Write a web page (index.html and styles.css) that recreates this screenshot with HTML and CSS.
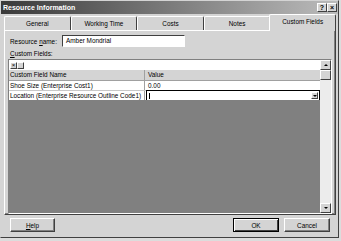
FILE: index.html
```html
<!DOCTYPE html>
<html lang="en">
<head>
  <meta charset="UTF-8">
  <title>Resource Information</title>
  <link rel="stylesheet" href="styles.css">
</head>
<body>

  <div class="window">
    <div class="titlebar">
      <span class="title">Resource Information</span>
      <span class="caption-btns">
        <span class="cbtn">?</span><span class="cbtn">×</span>
      </span>
    </div>

    <div class="page">
      <div class="tabs">
        <div class="tab">General</div>
        <div class="tab">Working Time</div>
        <div class="tab">Costs</div>
        <div class="tab">Notes</div>
        <div class="tab active">Custom Fields</div>
      </div>

      <div class="panel">
        <div class="name-row">
          <label>Resource <u>n</u>ame:</label>
          <div class="input">Amber Mondrial</div>
        </div>
        <div class="cf-label"><u>C</u>ustom Fields:</div>

        <div class="grid">
          <div class="grid-main">
            <div class="toolbar">
              <span class="tbtn">×</span><span class="tbtn"></span>
            </div>
            <div class="row head">
              <div class="c1">Custom Field Name</div>
              <div class="c2">Value</div>
            </div>
            <div class="row">
              <div class="c1">Shoe Size (Enterprise Cost1)</div>
              <div class="c2">0.00</div>
            </div>
            <div class="row last">
              <div class="c1">Location (Enterprise Resource Outline Code1)</div>
              <div class="c2 edit">
                <span class="caret"></span>
                <span class="dd"><i class="arrow down"></i></span>
              </div>
            </div>
            <div class="empty"></div>
          </div>
          <div class="vscroll">
            <div class="sbtn"><i class="arrow up"></i></div>
            <div class="thumb"></div>
            <div class="track"></div>
            <div class="sbtn"><i class="arrow down"></i></div>
          </div>
        </div>
      </div>

      <div class="buttons">
        <button class="btn help"><u>H</u>elp</button>
        <button class="btn default">OK</button>
        <button class="btn">Cancel</button>
      </div>
    </div>
  </div>

</body>
</html>
```

FILE: styles.css
```css
/* base */
body {
  margin: 0;
  background: #dcdcdc;
  font-family: "Liberation Sans", Arial, sans-serif;
  font-size: 6.4px;
  color: #000;
}
u { text-decoration: underline; }

/* dialog frame */
.window {
  width: 339px;
  height: 238px;
  box-sizing: border-box;
  background: #d4d4d4;
  border: 1px solid;
  border-color: #d4d4d4 #404040 #404040 #d4d4d4;
  display: flex;
  flex-direction: column;
}
.titlebar {
  height: 13px;
  background: linear-gradient(to right, #3a3a3a, #bcbcbc);
  display: flex;
  align-items: center;
  justify-content: space-between;
  padding: 0 1px 0 2px;
}
.title {
  color: #fff;
  font-weight: bold;
  font-size: 7px;
}
.caption-btns { display: flex; }
.cbtn {
  width: 10px;
  height: 9px;
  box-sizing: border-box;
  background: #d4d4d4;
  border: 1px solid;
  border-color: #fff #404040 #404040 #fff;
  font-size: 7px;
  font-weight: bold;
  line-height: 7px;
  text-align: center;
}

.page {
  flex: 1;
  padding: 0 2px 0 3px;
  display: flex;
  flex-direction: column;
}

/* tabs */
.tabs {
  display: flex;
  height: 16px;
  align-items: flex-end;
  position: relative;
  z-index: 1;
}
.tab {
  flex: 1;
  height: 14px;
  box-sizing: border-box;
  border: 1px solid;
  border-bottom: none;
  border-color: #fff #404040 transparent #fff;
  border-radius: 2px 2px 0 0;
  text-align: center;
  line-height: 13px;
}
.tab.active {
  height: 17px;
  margin: 0 0 -1px -1px;
  background: #d4d4d4;
  line-height: 13px;
}

/* tab page */
.panel {
  height: 185px;
  box-sizing: border-box;
  border: 1px solid;
  border-color: #fff #404040 #404040 #fff;
  box-shadow: inset -1px -1px #808080;
  padding: 4px 3px 0 3px;
}
.name-row {
  display: flex;
  align-items: center;
  height: 12px;
  padding-left: 2px;
}
.name-row label { width: 52px; }
.input {
  width: 123px;
  height: 12px;
  box-sizing: border-box;
  background: #fff;
  border: 1px solid;
  border-color: #404040 #fff #fff #404040;
  padding-left: 3px;
  line-height: 10px;
}
.cf-label {
  height: 12px;
  box-sizing: border-box;
  padding: 2px 0 0 2px;
  line-height: 10px;
}

/* custom field grid */
.grid {
  height: 155px;
  box-sizing: border-box;
  border: 1px solid;
  border-color: #808080 #fff #fff #808080;
  display: flex;
}
.grid-main {
  flex: 1;
  display: flex;
  flex-direction: column;
}
.toolbar {
  height: 10px;
  background: #fff;
  display: flex;
  align-items: center;
  padding-left: 1px;
}
.tbtn {
  width: 7px;
  height: 7px;
  box-sizing: border-box;
  background: #d4d4d4;
  border: 1px solid;
  border-color: #fff #404040 #404040 #fff;
  font-size: 6px;
  line-height: 5px;
  text-align: center;
}
.row {
  display: flex;
  height: 10px;
  box-sizing: border-box;
  line-height: 9px;
  background: #fff;
  border-bottom: 1px solid #c8c8c8;
}
.row.head {
  height: 11px;
  line-height: 10px;
  background: #d4d4d4;
  border-bottom-color: #a0a0a0;
}
.row.last {
  height: 9px;
  border-bottom: none;
}
.c1 {
  width: 136px;
  box-sizing: border-box;
  padding-left: 1px;
  border-right: 1px solid #a0a0a0;
  white-space: nowrap;
  overflow: hidden;
}
.c2 {
  flex: 1;
  padding-left: 3px;
}
.c2.edit {
  display: flex;
  align-items: center;
  justify-content: space-between;
  padding: 0 1px 0 2px;
  border: 1px solid #000;
  margin: -1px 0 -1px 1px;
}
.caret {
  width: 1px;
  height: 6px;
  background: #000;
}
.dd {
  width: 7px;
  height: 7px;
  box-sizing: border-box;
  background: #d4d4d4;
  border: 1px solid;
  border-color: #fff #404040 #404040 #fff;
  display: flex;
  align-items: center;
  justify-content: center;
}
.empty {
  flex: 1;
  background: #808080;
}

/* scrollbar */
.vscroll {
  width: 11px;
  display: flex;
  flex-direction: column;
  background: #ececec;
}
.sbtn, .thumb {
  height: 10px;
  box-sizing: border-box;
  background: #d4d4d4;
  border: 1px solid;
  border-color: #fff #404040 #404040 #fff;
  display: flex;
  align-items: center;
  justify-content: center;
}
.track { flex: 1; }
.arrow {
  width: 0;
  height: 0;
  border-left: 2px solid transparent;
  border-right: 2px solid transparent;
}
.arrow.up { border-bottom: 2px solid #000; }
.arrow.down { border-top: 2px solid #000; }

/* dialog buttons */
.buttons {
  display: flex;
  gap: 5px;
  margin-top: 3px;
  padding: 0 6px;
}
.btn {
  width: 46px;
  height: 14px;
  box-sizing: border-box;
  padding: 0;
  font-family: inherit;
  font-size: 6.4px;
  color: #000;
  background: #d4d4d4;
  border: 1px solid;
  border-color: #fff #404040 #404040 #fff;
  box-shadow: inset -1px -1px #808080;
}
.btn.help {
  width: 45px;
  margin-right: auto;
}
.btn.default {
  border: 1px solid #000;
  box-shadow: inset 1px 1px #fff, inset -1px -1px #404040;
}
```
